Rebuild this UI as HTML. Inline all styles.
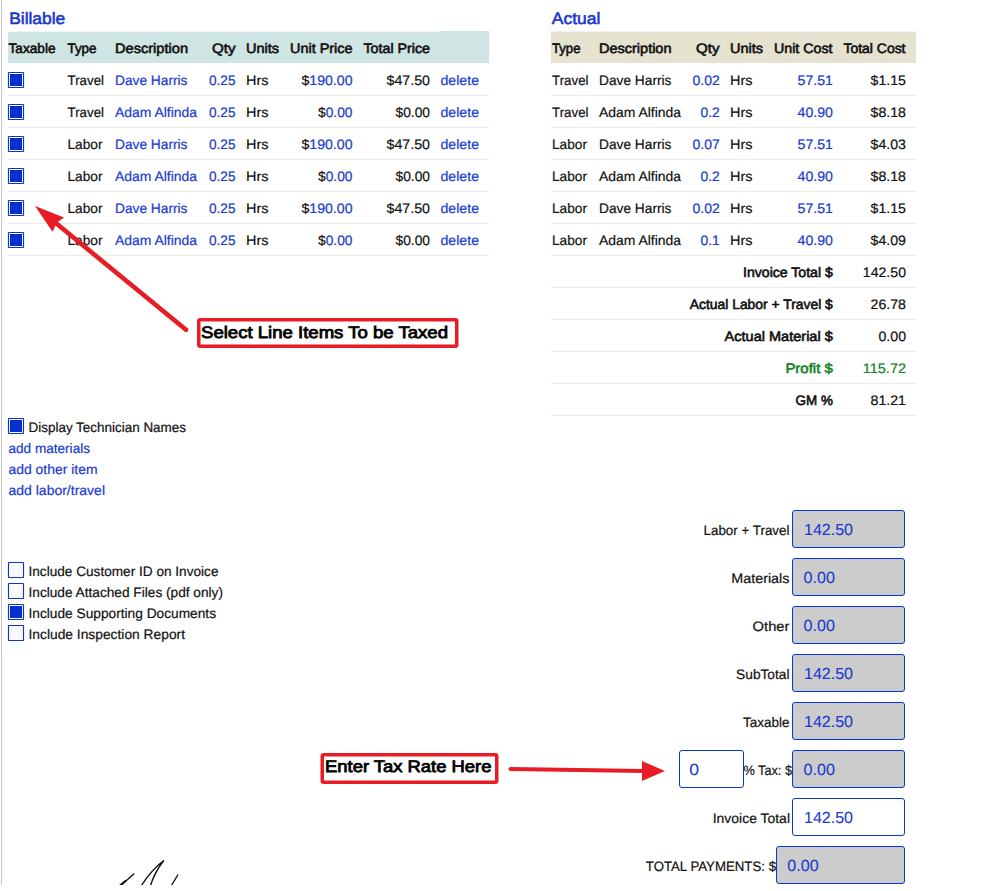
<!DOCTYPE html>
<html><head><meta charset="utf-8"><title>Invoice</title>
<style>
html,body{margin:0;padding:0;background:#fff;width:988px;height:891px;overflow:hidden}
svg{display:block;font-family:"Liberation Sans", sans-serif;text-rendering:geometricPrecision}
</style></head><body>
<svg width="988" height="891" viewBox="0 0 988 891">
<rect x="1" y="0" width="1" height="885" fill="#c8c8c8"/>
<text x="9.2" y="23.8" font-size="16.5" fill="#1836cc" stroke="#1836cc" stroke-width="0.55" textLength="56" lengthAdjust="spacingAndGlyphs">Billable</text>
<rect x="8" y="32" width="481" height="31" fill="#cfe5e3"/>
<rect x="440" y="31" width="49" height="1" fill="#cfe5e3"/>
<rect x="8" y="31" width="432" height="1" fill="#f0f7f6"/>
<text x="8.5" y="53" font-size="13.7" fill="#111111" stroke="#111111" stroke-width="0.6" textLength="47" lengthAdjust="spacingAndGlyphs">Taxable</text>
<text x="67.5" y="53" font-size="13.7" fill="#111111" stroke="#111111" stroke-width="0.6" textLength="29" lengthAdjust="spacingAndGlyphs">Type</text>
<text x="115" y="53" font-size="13.7" fill="#111111" stroke="#111111" stroke-width="0.6" textLength="73" lengthAdjust="spacingAndGlyphs">Description</text>
<text x="235.5" y="53" font-size="13.7" fill="#111111" stroke="#111111" stroke-width="0.6" text-anchor="end" textLength="23.5" lengthAdjust="spacingAndGlyphs">Qty</text>
<text x="246" y="53" font-size="13.7" fill="#111111" stroke="#111111" stroke-width="0.6" textLength="33" lengthAdjust="spacingAndGlyphs">Units</text>
<text x="290" y="53" font-size="13.7" fill="#111111" stroke="#111111" stroke-width="0.6" textLength="62.5" lengthAdjust="spacingAndGlyphs">Unit Price</text>
<text x="363.5" y="53" font-size="13.7" fill="#111111" stroke="#111111" stroke-width="0.6" textLength="66.5" lengthAdjust="spacingAndGlyphs">Total Price</text>
<rect x="8.5" y="72.5" width="15" height="15" fill="#ffffff" stroke="#0a34d4" stroke-width="1.15" rx="0.4"/>
<rect x="10" y="74" width="12" height="12" fill="#0530cc"/>
<text x="67.5" y="85" font-size="13.7" fill="#111111" stroke="#111111" stroke-width="0.2" textLength="36.5" lengthAdjust="spacingAndGlyphs">Travel</text>
<text x="115" y="85" font-size="13.7" fill="#1a3ad0" stroke="#1a3ad0" stroke-width="0.2" textLength="72.5" lengthAdjust="spacingAndGlyphs">Dave Harris</text>
<text x="235.5" y="85" font-size="13.7" fill="#1a3ad0" stroke="#1a3ad0" stroke-width="0.2" text-anchor="end" textLength="26.5" lengthAdjust="spacingAndGlyphs">0.25</text>
<text x="246" y="85" font-size="13.7" fill="#111111" stroke="#111111" stroke-width="0.2" textLength="22.5" lengthAdjust="spacingAndGlyphs">Hrs</text>
<text x="352.5" y="85" font-size="13.7" fill="#1a3ad0" stroke="#1a3ad0" stroke-width="0.2" text-anchor="end" textLength="51" lengthAdjust="spacingAndGlyphs"><tspan fill="#111111" stroke="#111111">$</tspan>190.00</text>
<text x="430" y="85" font-size="13.7" fill="#111111" stroke="#111111" stroke-width="0.2" text-anchor="end" textLength="43.5" lengthAdjust="spacingAndGlyphs">$47.50</text>
<text x="440.5" y="85" font-size="13.7" fill="#1a3ad0" stroke="#1a3ad0" stroke-width="0.2" textLength="38.5" lengthAdjust="spacingAndGlyphs">delete</text>
<rect x="8" y="95" width="481" height="1" fill="#eaeaea"/>
<rect x="8.5" y="104.5" width="15" height="15" fill="#ffffff" stroke="#0a34d4" stroke-width="1.15" rx="0.4"/>
<rect x="10" y="106" width="12" height="12" fill="#0530cc"/>
<text x="67.5" y="117" font-size="13.7" fill="#111111" stroke="#111111" stroke-width="0.2" textLength="36.5" lengthAdjust="spacingAndGlyphs">Travel</text>
<text x="115" y="117" font-size="13.7" fill="#1a3ad0" stroke="#1a3ad0" stroke-width="0.2" textLength="82" lengthAdjust="spacingAndGlyphs">Adam Alfinda</text>
<text x="235.5" y="117" font-size="13.7" fill="#1a3ad0" stroke="#1a3ad0" stroke-width="0.2" text-anchor="end" textLength="26.5" lengthAdjust="spacingAndGlyphs">0.25</text>
<text x="246" y="117" font-size="13.7" fill="#111111" stroke="#111111" stroke-width="0.2" textLength="22.5" lengthAdjust="spacingAndGlyphs">Hrs</text>
<text x="352.5" y="117" font-size="13.7" fill="#1a3ad0" stroke="#1a3ad0" stroke-width="0.2" text-anchor="end" textLength="34.5" lengthAdjust="spacingAndGlyphs"><tspan fill="#111111" stroke="#111111">$</tspan>0.00</text>
<text x="430" y="117" font-size="13.7" fill="#111111" stroke="#111111" stroke-width="0.2" text-anchor="end" textLength="34.5" lengthAdjust="spacingAndGlyphs">$0.00</text>
<text x="440.5" y="117" font-size="13.7" fill="#1a3ad0" stroke="#1a3ad0" stroke-width="0.2" textLength="38.5" lengthAdjust="spacingAndGlyphs">delete</text>
<rect x="8" y="127" width="481" height="1" fill="#eaeaea"/>
<rect x="8.5" y="136.5" width="15" height="15" fill="#ffffff" stroke="#0a34d4" stroke-width="1.15" rx="0.4"/>
<rect x="10" y="138" width="12" height="12" fill="#0530cc"/>
<text x="67.5" y="149" font-size="13.7" fill="#111111" stroke="#111111" stroke-width="0.2" textLength="35" lengthAdjust="spacingAndGlyphs">Labor</text>
<text x="115" y="149" font-size="13.7" fill="#1a3ad0" stroke="#1a3ad0" stroke-width="0.2" textLength="72.5" lengthAdjust="spacingAndGlyphs">Dave Harris</text>
<text x="235.5" y="149" font-size="13.7" fill="#1a3ad0" stroke="#1a3ad0" stroke-width="0.2" text-anchor="end" textLength="26.5" lengthAdjust="spacingAndGlyphs">0.25</text>
<text x="246" y="149" font-size="13.7" fill="#111111" stroke="#111111" stroke-width="0.2" textLength="22.5" lengthAdjust="spacingAndGlyphs">Hrs</text>
<text x="352.5" y="149" font-size="13.7" fill="#1a3ad0" stroke="#1a3ad0" stroke-width="0.2" text-anchor="end" textLength="51" lengthAdjust="spacingAndGlyphs"><tspan fill="#111111" stroke="#111111">$</tspan>190.00</text>
<text x="430" y="149" font-size="13.7" fill="#111111" stroke="#111111" stroke-width="0.2" text-anchor="end" textLength="43.5" lengthAdjust="spacingAndGlyphs">$47.50</text>
<text x="440.5" y="149" font-size="13.7" fill="#1a3ad0" stroke="#1a3ad0" stroke-width="0.2" textLength="38.5" lengthAdjust="spacingAndGlyphs">delete</text>
<rect x="8" y="159" width="481" height="1" fill="#eaeaea"/>
<rect x="8.5" y="168.5" width="15" height="15" fill="#ffffff" stroke="#0a34d4" stroke-width="1.15" rx="0.4"/>
<rect x="10" y="170" width="12" height="12" fill="#0530cc"/>
<text x="67.5" y="181" font-size="13.7" fill="#111111" stroke="#111111" stroke-width="0.2" textLength="35" lengthAdjust="spacingAndGlyphs">Labor</text>
<text x="115" y="181" font-size="13.7" fill="#1a3ad0" stroke="#1a3ad0" stroke-width="0.2" textLength="82" lengthAdjust="spacingAndGlyphs">Adam Alfinda</text>
<text x="235.5" y="181" font-size="13.7" fill="#1a3ad0" stroke="#1a3ad0" stroke-width="0.2" text-anchor="end" textLength="26.5" lengthAdjust="spacingAndGlyphs">0.25</text>
<text x="246" y="181" font-size="13.7" fill="#111111" stroke="#111111" stroke-width="0.2" textLength="22.5" lengthAdjust="spacingAndGlyphs">Hrs</text>
<text x="352.5" y="181" font-size="13.7" fill="#1a3ad0" stroke="#1a3ad0" stroke-width="0.2" text-anchor="end" textLength="34.5" lengthAdjust="spacingAndGlyphs"><tspan fill="#111111" stroke="#111111">$</tspan>0.00</text>
<text x="430" y="181" font-size="13.7" fill="#111111" stroke="#111111" stroke-width="0.2" text-anchor="end" textLength="34.5" lengthAdjust="spacingAndGlyphs">$0.00</text>
<text x="440.5" y="181" font-size="13.7" fill="#1a3ad0" stroke="#1a3ad0" stroke-width="0.2" textLength="38.5" lengthAdjust="spacingAndGlyphs">delete</text>
<rect x="8" y="191" width="481" height="1" fill="#eaeaea"/>
<rect x="8.5" y="200.5" width="15" height="15" fill="#ffffff" stroke="#0a34d4" stroke-width="1.15" rx="0.4"/>
<rect x="10" y="202" width="12" height="12" fill="#0530cc"/>
<text x="67.5" y="213" font-size="13.7" fill="#111111" stroke="#111111" stroke-width="0.2" textLength="35" lengthAdjust="spacingAndGlyphs">Labor</text>
<text x="115" y="213" font-size="13.7" fill="#1a3ad0" stroke="#1a3ad0" stroke-width="0.2" textLength="72.5" lengthAdjust="spacingAndGlyphs">Dave Harris</text>
<text x="235.5" y="213" font-size="13.7" fill="#1a3ad0" stroke="#1a3ad0" stroke-width="0.2" text-anchor="end" textLength="26.5" lengthAdjust="spacingAndGlyphs">0.25</text>
<text x="246" y="213" font-size="13.7" fill="#111111" stroke="#111111" stroke-width="0.2" textLength="22.5" lengthAdjust="spacingAndGlyphs">Hrs</text>
<text x="352.5" y="213" font-size="13.7" fill="#1a3ad0" stroke="#1a3ad0" stroke-width="0.2" text-anchor="end" textLength="51" lengthAdjust="spacingAndGlyphs"><tspan fill="#111111" stroke="#111111">$</tspan>190.00</text>
<text x="430" y="213" font-size="13.7" fill="#111111" stroke="#111111" stroke-width="0.2" text-anchor="end" textLength="43.5" lengthAdjust="spacingAndGlyphs">$47.50</text>
<text x="440.5" y="213" font-size="13.7" fill="#1a3ad0" stroke="#1a3ad0" stroke-width="0.2" textLength="38.5" lengthAdjust="spacingAndGlyphs">delete</text>
<rect x="8" y="223" width="481" height="1" fill="#eaeaea"/>
<rect x="8.5" y="232.5" width="15" height="15" fill="#ffffff" stroke="#0a34d4" stroke-width="1.15" rx="0.4"/>
<rect x="10" y="234" width="12" height="12" fill="#0530cc"/>
<text x="67.5" y="245" font-size="13.7" fill="#111111" stroke="#111111" stroke-width="0.2" textLength="35" lengthAdjust="spacingAndGlyphs">Labor</text>
<text x="115" y="245" font-size="13.7" fill="#1a3ad0" stroke="#1a3ad0" stroke-width="0.2" textLength="82" lengthAdjust="spacingAndGlyphs">Adam Alfinda</text>
<text x="235.5" y="245" font-size="13.7" fill="#1a3ad0" stroke="#1a3ad0" stroke-width="0.2" text-anchor="end" textLength="26.5" lengthAdjust="spacingAndGlyphs">0.25</text>
<text x="246" y="245" font-size="13.7" fill="#111111" stroke="#111111" stroke-width="0.2" textLength="22.5" lengthAdjust="spacingAndGlyphs">Hrs</text>
<text x="352.5" y="245" font-size="13.7" fill="#1a3ad0" stroke="#1a3ad0" stroke-width="0.2" text-anchor="end" textLength="34.5" lengthAdjust="spacingAndGlyphs"><tspan fill="#111111" stroke="#111111">$</tspan>0.00</text>
<text x="430" y="245" font-size="13.7" fill="#111111" stroke="#111111" stroke-width="0.2" text-anchor="end" textLength="34.5" lengthAdjust="spacingAndGlyphs">$0.00</text>
<text x="440.5" y="245" font-size="13.7" fill="#1a3ad0" stroke="#1a3ad0" stroke-width="0.2" textLength="38.5" lengthAdjust="spacingAndGlyphs">delete</text>
<rect x="8" y="255" width="481" height="1" fill="#eaeaea"/>
<text x="551.8" y="23.8" font-size="16.5" fill="#1836cc" stroke="#1836cc" stroke-width="0.55" textLength="48.5" lengthAdjust="spacingAndGlyphs">Actual</text>
<rect x="551" y="32" width="365" height="31" fill="#e6e2d0"/>
<rect x="551" y="31" width="365" height="1" fill="#f3f1e9"/>
<text x="552" y="53" font-size="13.7" fill="#111111" stroke="#111111" stroke-width="0.6" textLength="28.5" lengthAdjust="spacingAndGlyphs">Type</text>
<text x="599" y="53" font-size="13.7" fill="#111111" stroke="#111111" stroke-width="0.6" textLength="72.5" lengthAdjust="spacingAndGlyphs">Description</text>
<text x="719.5" y="53" font-size="13.7" fill="#111111" stroke="#111111" stroke-width="0.6" text-anchor="end" textLength="23.5" lengthAdjust="spacingAndGlyphs">Qty</text>
<text x="730" y="53" font-size="13.7" fill="#111111" stroke="#111111" stroke-width="0.6" textLength="33" lengthAdjust="spacingAndGlyphs">Units</text>
<text x="774" y="53" font-size="13.7" fill="#111111" stroke="#111111" stroke-width="0.6" textLength="58.5" lengthAdjust="spacingAndGlyphs">Unit Cost</text>
<text x="843.5" y="53" font-size="13.7" fill="#111111" stroke="#111111" stroke-width="0.6" textLength="62" lengthAdjust="spacingAndGlyphs">Total Cost</text>
<text x="552" y="85" font-size="13.7" fill="#111111" stroke="#111111" stroke-width="0.2" textLength="36.5" lengthAdjust="spacingAndGlyphs">Travel</text>
<text x="599" y="85" font-size="13.7" fill="#111111" stroke="#111111" stroke-width="0.2" textLength="72.5" lengthAdjust="spacingAndGlyphs">Dave Harris</text>
<text x="719.8" y="85" font-size="13.7" fill="#1a3ad0" stroke="#1a3ad0" stroke-width="0.2" text-anchor="end" textLength="27.3" lengthAdjust="spacingAndGlyphs">0.02</text>
<text x="730" y="85" font-size="13.7" fill="#111111" stroke="#111111" stroke-width="0.2" textLength="22.5" lengthAdjust="spacingAndGlyphs">Hrs</text>
<text x="833" y="85" font-size="13.7" fill="#1a3ad0" stroke="#1a3ad0" stroke-width="0.2" text-anchor="end" textLength="35.4" lengthAdjust="spacingAndGlyphs">57.51</text>
<text x="906" y="85" font-size="13.7" fill="#111111" stroke="#111111" stroke-width="0.2" text-anchor="end" textLength="35.4" lengthAdjust="spacingAndGlyphs">$1.15</text>
<rect x="551" y="95" width="365" height="1" fill="#eaeaea"/>
<text x="552" y="117" font-size="13.7" fill="#111111" stroke="#111111" stroke-width="0.2" textLength="36.5" lengthAdjust="spacingAndGlyphs">Travel</text>
<text x="599" y="117" font-size="13.7" fill="#111111" stroke="#111111" stroke-width="0.2" textLength="82" lengthAdjust="spacingAndGlyphs">Adam Alfinda</text>
<text x="719.8" y="117" font-size="13.7" fill="#1a3ad0" stroke="#1a3ad0" stroke-width="0.2" text-anchor="end" textLength="19.2" lengthAdjust="spacingAndGlyphs">0.2</text>
<text x="730" y="117" font-size="13.7" fill="#111111" stroke="#111111" stroke-width="0.2" textLength="22.5" lengthAdjust="spacingAndGlyphs">Hrs</text>
<text x="833" y="117" font-size="13.7" fill="#1a3ad0" stroke="#1a3ad0" stroke-width="0.2" text-anchor="end" textLength="35.4" lengthAdjust="spacingAndGlyphs">40.90</text>
<text x="906" y="117" font-size="13.7" fill="#111111" stroke="#111111" stroke-width="0.2" text-anchor="end" textLength="35.4" lengthAdjust="spacingAndGlyphs">$8.18</text>
<rect x="551" y="127" width="365" height="1" fill="#eaeaea"/>
<text x="552" y="149" font-size="13.7" fill="#111111" stroke="#111111" stroke-width="0.2" textLength="35" lengthAdjust="spacingAndGlyphs">Labor</text>
<text x="599" y="149" font-size="13.7" fill="#111111" stroke="#111111" stroke-width="0.2" textLength="72.5" lengthAdjust="spacingAndGlyphs">Dave Harris</text>
<text x="719.8" y="149" font-size="13.7" fill="#1a3ad0" stroke="#1a3ad0" stroke-width="0.2" text-anchor="end" textLength="27.3" lengthAdjust="spacingAndGlyphs">0.07</text>
<text x="730" y="149" font-size="13.7" fill="#111111" stroke="#111111" stroke-width="0.2" textLength="22.5" lengthAdjust="spacingAndGlyphs">Hrs</text>
<text x="833" y="149" font-size="13.7" fill="#1a3ad0" stroke="#1a3ad0" stroke-width="0.2" text-anchor="end" textLength="35.4" lengthAdjust="spacingAndGlyphs">57.51</text>
<text x="906" y="149" font-size="13.7" fill="#111111" stroke="#111111" stroke-width="0.2" text-anchor="end" textLength="35.4" lengthAdjust="spacingAndGlyphs">$4.03</text>
<rect x="551" y="159" width="365" height="1" fill="#eaeaea"/>
<text x="552" y="181" font-size="13.7" fill="#111111" stroke="#111111" stroke-width="0.2" textLength="35" lengthAdjust="spacingAndGlyphs">Labor</text>
<text x="599" y="181" font-size="13.7" fill="#111111" stroke="#111111" stroke-width="0.2" textLength="82" lengthAdjust="spacingAndGlyphs">Adam Alfinda</text>
<text x="719.8" y="181" font-size="13.7" fill="#1a3ad0" stroke="#1a3ad0" stroke-width="0.2" text-anchor="end" textLength="19.2" lengthAdjust="spacingAndGlyphs">0.2</text>
<text x="730" y="181" font-size="13.7" fill="#111111" stroke="#111111" stroke-width="0.2" textLength="22.5" lengthAdjust="spacingAndGlyphs">Hrs</text>
<text x="833" y="181" font-size="13.7" fill="#1a3ad0" stroke="#1a3ad0" stroke-width="0.2" text-anchor="end" textLength="35.4" lengthAdjust="spacingAndGlyphs">40.90</text>
<text x="906" y="181" font-size="13.7" fill="#111111" stroke="#111111" stroke-width="0.2" text-anchor="end" textLength="35.4" lengthAdjust="spacingAndGlyphs">$8.18</text>
<rect x="551" y="191" width="365" height="1" fill="#eaeaea"/>
<text x="552" y="213" font-size="13.7" fill="#111111" stroke="#111111" stroke-width="0.2" textLength="35" lengthAdjust="spacingAndGlyphs">Labor</text>
<text x="599" y="213" font-size="13.7" fill="#111111" stroke="#111111" stroke-width="0.2" textLength="72.5" lengthAdjust="spacingAndGlyphs">Dave Harris</text>
<text x="719.8" y="213" font-size="13.7" fill="#1a3ad0" stroke="#1a3ad0" stroke-width="0.2" text-anchor="end" textLength="27.3" lengthAdjust="spacingAndGlyphs">0.02</text>
<text x="730" y="213" font-size="13.7" fill="#111111" stroke="#111111" stroke-width="0.2" textLength="22.5" lengthAdjust="spacingAndGlyphs">Hrs</text>
<text x="833" y="213" font-size="13.7" fill="#1a3ad0" stroke="#1a3ad0" stroke-width="0.2" text-anchor="end" textLength="35.4" lengthAdjust="spacingAndGlyphs">57.51</text>
<text x="906" y="213" font-size="13.7" fill="#111111" stroke="#111111" stroke-width="0.2" text-anchor="end" textLength="35.4" lengthAdjust="spacingAndGlyphs">$1.15</text>
<rect x="551" y="223" width="365" height="1" fill="#eaeaea"/>
<text x="552" y="245" font-size="13.7" fill="#111111" stroke="#111111" stroke-width="0.2" textLength="35" lengthAdjust="spacingAndGlyphs">Labor</text>
<text x="599" y="245" font-size="13.7" fill="#111111" stroke="#111111" stroke-width="0.2" textLength="82" lengthAdjust="spacingAndGlyphs">Adam Alfinda</text>
<text x="719.8" y="245" font-size="13.7" fill="#1a3ad0" stroke="#1a3ad0" stroke-width="0.2" text-anchor="end" textLength="19.2" lengthAdjust="spacingAndGlyphs">0.1</text>
<text x="730" y="245" font-size="13.7" fill="#111111" stroke="#111111" stroke-width="0.2" textLength="22.5" lengthAdjust="spacingAndGlyphs">Hrs</text>
<text x="833" y="245" font-size="13.7" fill="#1a3ad0" stroke="#1a3ad0" stroke-width="0.2" text-anchor="end" textLength="35.4" lengthAdjust="spacingAndGlyphs">40.90</text>
<text x="906" y="245" font-size="13.7" fill="#111111" stroke="#111111" stroke-width="0.2" text-anchor="end" textLength="35.4" lengthAdjust="spacingAndGlyphs">$4.09</text>
<rect x="551" y="255" width="365" height="1" fill="#eaeaea"/>
<text x="832.8" y="277" font-size="13.7" fill="#111111" stroke="#111111" stroke-width="0.6" text-anchor="end" textLength="89.8" lengthAdjust="spacingAndGlyphs">Invoice Total $</text>
<text x="906" y="277" font-size="13.7" fill="#111111" stroke="#111111" stroke-width="0.2" text-anchor="end" textLength="43.2" lengthAdjust="spacingAndGlyphs">142.50</text>
<rect x="551" y="287" width="365" height="1" fill="#eaeaea"/>
<text x="832.8" y="309" font-size="13.7" fill="#111111" stroke="#111111" stroke-width="0.6" text-anchor="end" textLength="143" lengthAdjust="spacingAndGlyphs">Actual Labor + Travel $</text>
<text x="906" y="309" font-size="13.7" fill="#111111" stroke="#111111" stroke-width="0.2" text-anchor="end" textLength="35.4" lengthAdjust="spacingAndGlyphs">26.78</text>
<rect x="551" y="319" width="365" height="1" fill="#eaeaea"/>
<text x="832.8" y="341" font-size="13.7" fill="#111111" stroke="#111111" stroke-width="0.6" text-anchor="end" textLength="108.2" lengthAdjust="spacingAndGlyphs">Actual Material $</text>
<text x="906" y="341" font-size="13.7" fill="#111111" stroke="#111111" stroke-width="0.2" text-anchor="end" textLength="27.5" lengthAdjust="spacingAndGlyphs">0.00</text>
<rect x="551" y="351" width="365" height="1" fill="#eaeaea"/>
<text x="832.8" y="373" font-size="13.7" fill="#17822a" stroke="#17822a" stroke-width="0.6" text-anchor="end" textLength="47.4" lengthAdjust="spacingAndGlyphs">Profit $</text>
<text x="906" y="373" font-size="13.7" fill="#17822a" stroke="#17822a" stroke-width="0.2" text-anchor="end" textLength="43.2" lengthAdjust="spacingAndGlyphs">115.72</text>
<rect x="551" y="383" width="365" height="1" fill="#eaeaea"/>
<text x="832.8" y="405" font-size="13.7" fill="#111111" stroke="#111111" stroke-width="0.6" text-anchor="end" textLength="37.2" lengthAdjust="spacingAndGlyphs">GM %</text>
<text x="906" y="405" font-size="13.7" fill="#111111" stroke="#111111" stroke-width="0.2" text-anchor="end" textLength="35.4" lengthAdjust="spacingAndGlyphs">81.21</text>
<rect x="551" y="415" width="365" height="1" fill="#eaeaea"/>
<rect x="8.5" y="418.5" width="15" height="15" fill="#ffffff" stroke="#0a34d4" stroke-width="1.15" rx="0.4"/>
<rect x="10" y="420" width="12" height="12" fill="#0530cc"/>
<text x="28.5" y="432" font-size="13.7" fill="#111111" stroke="#111111" stroke-width="0.2" textLength="157.5" lengthAdjust="spacingAndGlyphs">Display Technician Names</text>
<text x="8.5" y="452.5" font-size="13.7" fill="#1a3ad0" stroke="#1a3ad0" stroke-width="0.2" textLength="81.5" lengthAdjust="spacingAndGlyphs">add materials</text>
<text x="8.5" y="473.5" font-size="13.7" fill="#1a3ad0" stroke="#1a3ad0" stroke-width="0.2" textLength="89" lengthAdjust="spacingAndGlyphs">add other item</text>
<text x="8.5" y="494.5" font-size="13.7" fill="#1a3ad0" stroke="#1a3ad0" stroke-width="0.2" textLength="96.5" lengthAdjust="spacingAndGlyphs">add labor/travel</text>
<rect x="8.5" y="562.5" width="15" height="15" fill="#ffffff" stroke="#0a34d4" stroke-width="1.15" rx="0.4"/>
<rect x="10" y="564" width="12" height="12" fill="#f8f8fb"/>
<text x="28.5" y="575.6" font-size="13.7" fill="#111111" stroke="#111111" stroke-width="0.2" textLength="190" lengthAdjust="spacingAndGlyphs">Include Customer ID on Invoice</text>
<rect x="8.5" y="583.5" width="15" height="15" fill="#ffffff" stroke="#0a34d4" stroke-width="1.15" rx="0.4"/>
<rect x="10" y="585" width="12" height="12" fill="#f8f8fb"/>
<text x="28.5" y="596.6" font-size="13.7" fill="#111111" stroke="#111111" stroke-width="0.2" textLength="194.5" lengthAdjust="spacingAndGlyphs">Include Attached Files (pdf only)</text>
<rect x="8.5" y="604.5" width="15" height="15" fill="#ffffff" stroke="#0a34d4" stroke-width="1.15" rx="0.4"/>
<rect x="10" y="606" width="12" height="12" fill="#0530cc"/>
<text x="28.5" y="617.6" font-size="13.7" fill="#111111" stroke="#111111" stroke-width="0.2" textLength="187.5" lengthAdjust="spacingAndGlyphs">Include Supporting Documents</text>
<rect x="8.5" y="625.5" width="15" height="15" fill="#ffffff" stroke="#0a34d4" stroke-width="1.15" rx="0.4"/>
<rect x="10" y="627" width="12" height="12" fill="#f8f8fb"/>
<text x="28.5" y="638.6" font-size="13.7" fill="#111111" stroke="#111111" stroke-width="0.2" textLength="156.5" lengthAdjust="spacingAndGlyphs">Include Inspection Report</text>
<rect x="792.5" y="510.5" width="112" height="37" fill="#cccccc" stroke="#0a36d0" stroke-width="1" rx="2.5"/>
<text x="789.5" y="535" font-size="13.7" fill="#111111" stroke="#111111" stroke-width="0.2" text-anchor="end" textLength="86" lengthAdjust="spacingAndGlyphs">Labor + Travel</text>
<text x="804" y="535" font-size="16" fill="#1a3ad0" stroke="#1a3ad0" stroke-width="0.1" textLength="49" lengthAdjust="spacingAndGlyphs">142.50</text>
<rect x="792.5" y="558.5" width="112" height="37" fill="#cccccc" stroke="#0a36d0" stroke-width="1" rx="2.5"/>
<text x="789.5" y="583" font-size="13.7" fill="#111111" stroke="#111111" stroke-width="0.2" text-anchor="end" textLength="58.3" lengthAdjust="spacingAndGlyphs">Materials</text>
<text x="803.6" y="583" font-size="16" fill="#1a3ad0" stroke="#1a3ad0" stroke-width="0.1" textLength="31.3" lengthAdjust="spacingAndGlyphs">0.00</text>
<rect x="792.5" y="606.5" width="112" height="37" fill="#cccccc" stroke="#0a36d0" stroke-width="1" rx="2.5"/>
<text x="789.5" y="631" font-size="13.7" fill="#111111" stroke="#111111" stroke-width="0.2" text-anchor="end" textLength="36.9" lengthAdjust="spacingAndGlyphs">Other</text>
<text x="803.6" y="631" font-size="16" fill="#1a3ad0" stroke="#1a3ad0" stroke-width="0.1" textLength="31.3" lengthAdjust="spacingAndGlyphs">0.00</text>
<rect x="792.5" y="654.5" width="112" height="37" fill="#cccccc" stroke="#0a36d0" stroke-width="1" rx="2.5"/>
<text x="789.5" y="679" font-size="13.7" fill="#111111" stroke="#111111" stroke-width="0.2" text-anchor="end" textLength="53.4" lengthAdjust="spacingAndGlyphs">SubTotal</text>
<text x="804" y="679" font-size="16" fill="#1a3ad0" stroke="#1a3ad0" stroke-width="0.1" textLength="49" lengthAdjust="spacingAndGlyphs">142.50</text>
<rect x="792.5" y="702.5" width="112" height="37" fill="#cccccc" stroke="#0a36d0" stroke-width="1" rx="2.5"/>
<text x="789.5" y="727" font-size="13.7" fill="#111111" stroke="#111111" stroke-width="0.2" text-anchor="end" textLength="46.5" lengthAdjust="spacingAndGlyphs">Taxable</text>
<text x="804" y="727" font-size="16" fill="#1a3ad0" stroke="#1a3ad0" stroke-width="0.1" textLength="49" lengthAdjust="spacingAndGlyphs">142.50</text>
<rect x="679.5" y="750.5" width="64" height="37" fill="#ffffff" stroke="#0a36d0" stroke-width="1" rx="2.5"/>
<text x="689.2" y="775" font-size="16" fill="#1a3ad0" stroke="#1a3ad0" stroke-width="0.1" textLength="9.8" lengthAdjust="spacingAndGlyphs">0</text>
<text x="792" y="775" font-size="13.7" fill="#111111" stroke="#111111" stroke-width="0.2" text-anchor="end" textLength="48.5" lengthAdjust="spacingAndGlyphs">% Tax: $</text>
<rect x="792.5" y="750.5" width="112" height="37" fill="#cccccc" stroke="#0a36d0" stroke-width="1" rx="2.5"/>
<text x="803.6" y="775" font-size="16" fill="#1a3ad0" stroke="#1a3ad0" stroke-width="0.1" textLength="31.3" lengthAdjust="spacingAndGlyphs">0.00</text>
<rect x="792.5" y="798.5" width="112" height="37" fill="#ffffff" stroke="#0a36d0" stroke-width="1" rx="2.5"/>
<text x="790" y="823" font-size="13.7" fill="#111111" stroke="#111111" stroke-width="0.2" text-anchor="end" textLength="77.3" lengthAdjust="spacingAndGlyphs">Invoice Total</text>
<text x="804" y="823" font-size="16" fill="#1a3ad0" stroke="#1a3ad0" stroke-width="0.1" textLength="49" lengthAdjust="spacingAndGlyphs">142.50</text>
<rect x="776.5" y="846.5" width="128" height="37" fill="#cccccc" stroke="#0a36d0" stroke-width="1" rx="2.5"/>
<text x="776" y="871" font-size="13.7" fill="#111111" stroke="#111111" stroke-width="0.2" text-anchor="end" textLength="130.2" lengthAdjust="spacingAndGlyphs">TOTAL PAYMENTS: $</text>
<text x="787.3" y="871" font-size="16" fill="#1a3ad0" stroke="#1a3ad0" stroke-width="0.1" textLength="31.3" lengthAdjust="spacingAndGlyphs">0.00</text>
<rect x="198.75" y="319.75" width="258" height="26.5" fill="#ffffff" stroke="#e81c25" stroke-width="3.5" rx="1.5"/>
<text x="201" y="337.5" font-size="16.6" fill="#000" stroke="#000" stroke-width="0.8" textLength="247" lengthAdjust="spacingAndGlyphs">Select Line Items To be Taxed</text>
<rect x="322.25" y="754.75" width="174.5" height="27.5" fill="#ffffff" stroke="#e81c25" stroke-width="3.5" rx="1.5"/>
<text x="325" y="772.4" font-size="16.6" fill="#000" stroke="#000" stroke-width="0.8" textLength="166.5" lengthAdjust="spacingAndGlyphs">Enter Tax Rate Here</text>
<line x1="186" y1="329.8" x2="57" y2="224" stroke="#e81c25" stroke-width="4.6" stroke-linecap="round"/>
<polygon points="35,206 64,217.5 57,222.5 52.5,231.8" fill="#e81c25"/>
<line x1="510.5" y1="769" x2="645" y2="771" stroke="#e81c25" stroke-width="4" stroke-linecap="round"/>
<polygon points="665,771 642,761 642,781" fill="#e81c25"/>
<path d="M119 887 L133.8 874 M140.5 887 C148 875 155 867 163.8 860.5 C157 869 153 877 150 887 M170.5 887 L177.8 875" stroke="#111" stroke-width="1.4" fill="none" stroke-linecap="round"/>
<path d="M119.5 886 L126 880.5" stroke="#111" stroke-width="2" fill="none"/>
<rect x="0" y="885" width="988" height="6" fill="#fff"/>
</svg>
</body></html>
